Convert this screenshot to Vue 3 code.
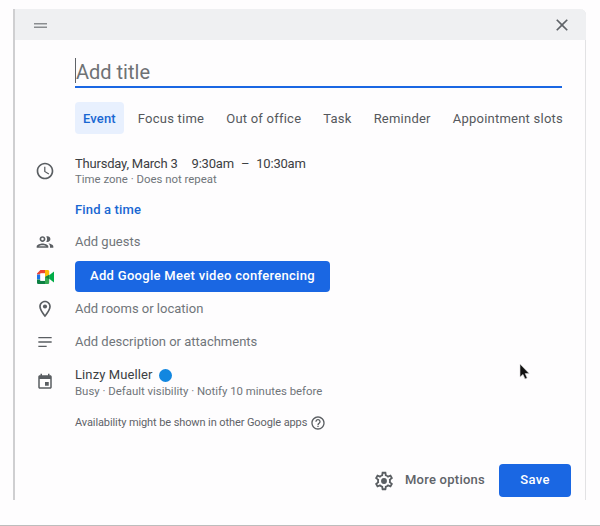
<template>
  <div class="page">
    <div class="dialog">
      <header class="dialog-head">
        <svg class="handle" width="14" height="6" viewBox="0 0 14 6"><path d="M0 0h13v1.4H0zM0 3.6h13V5H0z" /></svg>
        <svg class="close" width="20" height="20" viewBox="0 0 24 24"><path d="M19 6.41L17.59 5 12 10.59 6.41 5 5 6.41 10.59 12 5 17.59 6.41 19 12 13.41 17.59 19 19 17.59 13.41 12z" /></svg>
      </header>

      <div class="title-field">
        <span class="caret"></span>
        <span class="title-text">Add title</span>
      </div>

      <nav class="tabs">
        <span v-for="tab in tabs" :key="tab" class="tab" :class="{ active: tab === 'Event' }">{{ tab }}</span>
      </nav>

      <section class="row row-date">
        <div class="ic"><svg width="20" height="20" viewBox="0 0 24 24"><path d="M11.99 2C6.47 2 2 6.48 2 12s4.47 10 9.99 10C17.52 22 22 17.52 22 12S17.52 2 11.99 2zM12 20c-4.42 0-8-3.58-8-8s3.58-8 8-8 8 3.58 8 8-3.58 8-8 8zm.5-13H11v6l5.25 3.15.75-1.23-4.5-2.67z" /></svg></div>
        <div>
          <div class="main-line">
            <span>Thursday, March 3</span><span class="time">9:30am</span><span class="dash">–</span><span>10:30am</span>
          </div>
          <div class="sub-line">Time zone · Does not repeat</div>
        </div>
      </section>

      <a class="find-time">Find a time</a>

      <section class="row row-guests">
        <div class="ic"><svg width="20" height="20" viewBox="0 0 24 24"><path d="M9 13.75c-2.34 0-7 1.17-7 3.5V19h14v-1.75c0-2.33-4.66-3.5-7-3.5zM4.34 17c.84-.58 2.87-1.25 4.66-1.25s3.82.67 4.66 1.25H4.34zM9 12c1.93 0 3.5-1.57 3.5-3.5S10.93 5 9 5 5.5 6.57 5.5 8.5 7.07 12 9 12zm0-5c.83 0 1.5.67 1.5 1.5S9.83 10 9 10s-1.5-.67-1.5-1.5S8.17 7 9 7zm7.04 6.81c1.16.84 1.96 1.96 1.96 3.44V19h4v-1.75c0-2.02-3.5-3.17-5.96-3.44zM15 12c1.93 0 3.5-1.57 3.5-3.5S16.93 5 15 5c-.54 0-1.04.13-1.5.35.63.89 1 1.98 1 3.15s-.37 2.26-1 3.15c.46.22.96.35 1.5.35z" /></svg></div>
        <span class="placeholder">Add guests</span>
      </section>

      <section class="row row-meet">
        <div class="ic">
          <svg width="17" height="14" viewBox="0 0 17 14">
            <path fill="#ea4335" d="M3.4 0H8v3.4H3.4v1.2H0V3.4z" />
            <path fill="#1a73e8" d="M0 4.6h3.4v4.8H0z" />
            <path fill="#0d8043" d="M0 9.4h3.4v1.4H8V14H1.6C.7 14 0 13.3 0 12.4z" />
            <path fill="#fbbc04" d="M8 0h2.6c.9 0 1.6.7 1.6 1.6v3.1L8 7V3.4z" />
            <path fill="#34a853" d="M12.2 4.7v7.7c0 .9-.7 1.6-1.6 1.6H8v-3.2h0V7z" />
            <path fill="#00ac47" d="M12.2 5.2L17 1.6v10.8l-4.8-3.6z" />
            <path fill="#fff" d="M3.4 3.4H8V10.8H3.4z" />
            <path fill="#188038" d="M8 7l4.2-2.3v4.6z" />
          </svg>
        </div>
        <button class="btn-primary meet-btn">Add Google Meet video conferencing</button>
      </section>

      <section class="row row-place">
        <div class="ic"><svg width="20" height="20" viewBox="0 0 24 24"><path d="M12 2C8.13 2 5 5.13 5 9c0 5.25 7 13 7 13s7-7.75 7-13c0-3.87-3.13-7-7-7zM7 9c0-2.76 2.24-5 5-5s5 2.24 5 5c0 2.88-2.88 7.19-5 9.88C9.92 16.21 7 11.85 7 9z" /><circle cx="12" cy="9" r="2.5" /></svg></div>
        <span class="placeholder">Add rooms or location</span>
      </section>

      <section class="row row-desc">
        <div class="ic"><svg width="20" height="20" viewBox="0 0 24 24"><path d="M4 18h10v-1.6H4zM4 12.8h16v-1.6H4zM4 7.6h16V6H4z" /></svg></div>
        <span class="placeholder">Add description or attachments</span>
      </section>

      <section class="row row-owner">
        <div class="ic"><svg width="18" height="18" viewBox="0 0 24 24"><path d="M17 12h-5v5h5v-5zM16 1v2H8V1H6v2H5c-1.11 0-1.99.9-1.99 2L3 19c0 1.1.89 2 2 2h14c1.1 0 2-.9 2-2V5c0-1.1-.9-2-2-2h-1V1h-2zm3 18H5V8h14v11z" /></svg></div>
        <div>
          <div class="main-line owner-line"><span>Linzy Mueller</span><span class="dot"></span></div>
          <div class="sub-line">Busy · Default visibility · Notify 10 minutes before</div>
        </div>
      </section>

      <div class="avail">
        <span>Availability might be shown in other Google apps</span>
        <svg width="16" height="16" viewBox="0 0 24 24"><path d="M11 18h2v-2h-2v2zm1-16C6.48 2 2 6.48 2 12s4.48 10 10 10 10-4.48 10-10S17.52 2 12 2zm0 18c-4.41 0-8-3.59-8-8s3.59-8 8-8 8 3.59 8 8-3.59 8-8 8zm0-14c-2.21 0-4 1.79-4 4h2c0-1.1.9-2 2-2s2 .9 2 2c0 2-3 1.75-3 5h2c0-2.25 3-2.5 3-5 0-2.21-1.79-4-4-4z" /></svg>
      </div>

      <footer class="actions">
        <svg class="gear" width="22" height="22" viewBox="0 0 24 24"><path d="M19.43 12.98c.04-.32.07-.64.07-.98 0-.34-.03-.66-.07-.98l2.11-1.65c.19-.15.24-.42.12-.64l-2-3.46c-.09-.16-.26-.25-.44-.25-.06 0-.12.01-.17.03l-2.49 1c-.52-.4-1.08-.73-1.69-.98l-.38-2.65C14.46 2.18 14.25 2 14 2h-4c-.25 0-.46.18-.49.42l-.38 2.65c-.61.25-1.17.59-1.69.98l-2.49-1c-.06-.02-.12-.03-.18-.03-.17 0-.34.09-.43.25l-2 3.46c-.13.22-.07.49.12.64l2.11 1.65c-.04.32-.07.65-.07.98 0 .33.03.66.07.98l-2.11 1.65c-.19.15-.24.42-.12.64l2 3.46c.09.16.26.25.44.25.06 0 .12-.01.17-.03l2.49-1c.52.4 1.08.73 1.69.98l.38 2.65c.03.24.24.42.49.42h4c.25 0 .46-.18.49-.42l.38-2.65c.61-.25 1.17-.59 1.69-.98l2.49 1c.06.02.12.03.18.03.17 0 .34-.09.43-.25l2-3.46c.12-.22.07-.49-.12-.64l-2.11-1.65zm-1.98-1.71c.04.31.05.52.05.73 0 .21-.02.43-.05.73l-.14 1.13.89.7 1.08.84-.7 1.21-1.27-.51-1.04-.42-.9.68c-.43.32-.84.56-1.25.73l-1.06.43-.16 1.13-.2 1.35h-1.4l-.19-1.35-.16-1.13-1.06-.43c-.43-.18-.83-.41-1.23-.71l-.91-.7-1.06.43-1.27.51-.7-1.21 1.08-.84.89-.7-.14-1.13c-.03-.31-.05-.54-.05-.74s.02-.43.05-.73l.14-1.13-.89-.7-1.08-.84.7-1.21 1.27.51 1.04.42.9-.68c.43-.32.84-.56 1.25-.73l1.06-.43.16-1.13.2-1.35h1.39l.19 1.35.16 1.13 1.06.43c.43.18.83.41 1.23.71l.91.7 1.06-.43 1.27-.51.7 1.21-1.07.85-.89.7.14 1.13z" /><circle cx="12" cy="12" r="3.2" /></svg>
        <span class="more">More options</span>
        <button class="btn-primary save-btn">Save</button>
      </footer>
    </div>

    <!-- mouse pointer sits on top of the dialog -->
    <svg class="pointer" width="12" height="18" viewBox="0 0 12 18">
      <path fill="#111" stroke="#ddd" stroke-width="0.6" d="M1 1v13l3-2.6 2 4.6 2.2-1-2-4.4h4z" />
    </svg>
  </div>
</template>

<script setup>
const tabs = ['Event', 'Focus time', 'Out of office', 'Task', 'Reminder', 'Appointment slots']
</script>

<style>
html, body { margin: 0; background: #fefdfe; }
</style>

<style scoped>
.page {
  position: relative;
  box-sizing: border-box;
  height: 526px;
  width: 600px;
  padding: 9px 0 0 13px;
  border-bottom: 1px solid #bdbdbd;
  background: #fefdfe;
  font-family: Roboto, "Liberation Sans", sans-serif;
  color: #3c4043;
  overflow: hidden;
}
.dialog {
  box-sizing: border-box;
  width: 573px;
  height: 491px;
  border-left: 2px solid #cfcfd1;
  border-right: 1px solid #e2e2e4;
  border-top-right-radius: 6px;
}
.dialog-head {
  height: 31px;
  margin-right: -1px;
  background: #eff0f2;
  border-top-right-radius: 6px;
  display: flex;
  align-items: center;
  justify-content: space-between;
  padding: 0 14px 0 19px;
}
.handle { fill: #8a8d90; margin-top: 2px; }
.close { fill: #5f6368; }

.title-field {
  position: relative;
  margin: 15px 23px 0 60px;
  height: 29px;
  padding-top: 2px;
  border-bottom: 2px solid #1a67e3;
  display: flex;
  align-items: center;
}
.caret {
  position: absolute;
  left: 0;
  top: 3px;
  width: 1px;
  height: 25px;
  background: #5f6368;
}
.title-text { font-size: 20px; color: #6f7275; padding-left: 1px; }

.tabs {
  display: flex;
  gap: 6px;
  margin: 14px 0 0 60px;
}
.tab {
  height: 32px;
  line-height: 33px;
  padding: 0 8px;
  border-radius: 4px;
  font-size: 13px;
  letter-spacing: 0.23px;
  color: #55585c;
  white-space: nowrap;
}
.tab.active { background: #e8f0fe; color: #1967d2; font-weight: 500; letter-spacing: 0.15px; }

.row { display: flex; align-items: center; }
.ic {
  width: 60px;
  flex: none;
  display: flex;
  justify-content: center;
  align-items: center;
}
.ic svg { fill: #5a5e62; }

.row-date { margin-top: 21px; }
.row-date .sub-line { margin-top: -1px; }
.main-line {
  font-size: 13px;
  line-height: 18px;
  letter-spacing: -0.2px;
  color: #3c4043;
  display: flex;
  align-items: center;
}
.time { margin-left: 14px; }
.dash { margin: 0 7px; }
.sub-line {
  font-size: 11.4px;
  line-height: 14px;
  color: #70757a;
}
.find-time {
  display: block;
  margin: 14px 0 0 60px;
  font-size: 13px;
  line-height: 20px;
  font-weight: 500;
  letter-spacing: 0.15px;
  color: #1967d2;
}
.row-guests { margin-top: 12px; }
.placeholder {
  font-size: 13px;
  line-height: 20px;
  color: #70757a;
}
.row-meet { margin-top: 9px; }
.btn-primary {
  border: none;
  border-radius: 4px;
  background: #1a67e3;
  color: #fff;
  font-family: inherit;
  font-size: 13px;
  font-weight: 500;
  letter-spacing: 0.3px;
}
.meet-btn { width: 255px; height: 31px; padding: 0 0 2px; }
.row-place { margin-top: 7px; }
.row-desc { margin-top: 13px; }
.row-owner { margin-top: 14px; }
.owner-line { gap: 6px; letter-spacing: 0.1px; }
.dot {
  width: 13px;
  height: 13px;
  border-radius: 50%;
  background: #1287e0;
}
.avail {
  display: flex;
  align-items: center;
  gap: 3px;
  margin: 15px 0 0 60px;
  font-size: 11px;
  line-height: 20px;
  letter-spacing: -0.1px;
  color: #5f6368;
}
.avail svg { fill: #5a5e62; }
.actions {
  display: flex;
  justify-content: flex-end;
  align-items: center;
  margin: 31px 14px 0 0;
}
.gear { fill: #5a5e62; margin-right: 10px; }
.more {
  font-size: 13px;
  font-weight: 500;
  letter-spacing: 0.25px;
  color: #5f6368;
  margin: 0 14px 2px 0;
}
.save-btn { width: 72px; height: 33px; padding: 0 0 2px; }
.pointer { position: absolute; left: 519px; top: 363px; }
</style>
